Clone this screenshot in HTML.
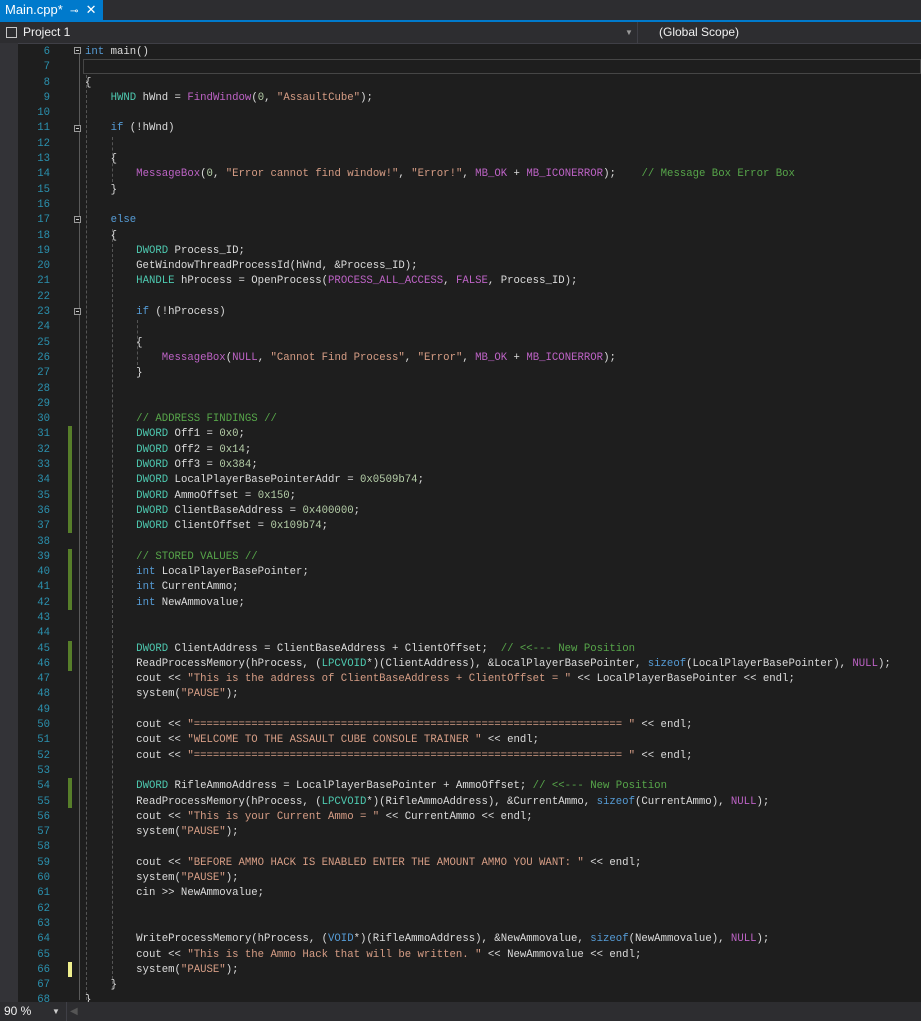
<!DOCTYPE html>
<html><head><meta charset="utf-8"><style>
body{margin:0;width:921px;height:1021px;background:#1e1e1e;overflow:hidden;position:relative;font-family:"Liberation Sans",sans-serif}
.tabbar{position:absolute;left:0;top:0;width:921px;height:20px;background:#2d2d30}
.tab{position:absolute;left:0;top:0;width:103px;height:20px;background:#007acc;color:#fff;font-size:13px;line-height:20px;padding-left:5px;box-sizing:border-box}
.blue{position:absolute;left:0;top:20px;width:921px;height:2px;background:#007acc}
.nav{position:absolute;left:0;top:22px;width:921px;height:21px;background:#2d2d30;border-bottom:1px solid #3f3f46;color:#f1f1f1;font-size:12px;line-height:21px}
.gut{position:absolute;left:0;top:43px;width:18px;height:960px;background:#333337}
.code{position:absolute;left:0;top:45px;margin:0;font-family:"Liberation Mono",monospace;font-size:10.67px;line-height:15.29px;color:#dcdcdc;white-space:pre}
.ln{position:absolute;left:18px;top:45px;width:32px;text-align:right;margin:0;font-family:"Liberation Mono",monospace;font-size:10.67px;line-height:15.29px;color:#2b91af;white-space:pre}
.k{color:#569cd6}.t{color:#4ec9b0}.m{color:#bd63c5}.s{color:#d69d85}.c{color:#57a64a}.n{color:#b5cea8}
.g{position:absolute;left:68px;width:4px;background:#577e2a}
.fb{position:absolute;left:74px;width:7px;height:7px;border:1px solid #999;box-sizing:border-box;background:#1e1e1e}
.fb:after{content:"";position:absolute;left:1px;top:2px;width:3px;height:1px;background:#ccc}
.vg{position:absolute;border-left:1px dashed #555;width:0}
.status{position:absolute;left:0;top:1002px;width:921px;height:19px;background:#2d2d30;color:#f1f1f1;font-size:12px;line-height:19px}
</style></head><body>
<div class="tabbar"><div class="tab">Main.cpp*&nbsp;&nbsp;<span style="font-size:10px">⊸</span>&nbsp;&nbsp;✕</div></div>
<div class="blue"></div>
<div class="nav">
<span style="position:absolute;left:6px;top:5px;width:11px;height:11px;border:1px solid #c6c6c6;box-sizing:border-box"></span>
<span style="position:absolute;left:23px">Project 1</span>
<span style="position:absolute;left:625px;color:#999;font-size:8px">▼</span>
<span style="position:absolute;left:637px;top:0;height:21px;border-left:1px solid #3f3f46"></span>
<span style="position:absolute;left:659px">(Global Scope)</span>
</div>
<div class="gut"></div>
<div style="position:absolute;left:83px;top:59px;width:838px;height:15px;border:1px solid #464646;box-sizing:border-box"></div>
<div style="position:absolute;left:79px;top:54px;height:946px;border-left:1px solid #5a5a5a"></div>
<div class="vg" style="left:86px;top:75px;height:925px"></div>
<div class="vg" style="left:112px;top:137px;height:45px"></div>
<div class="vg" style="left:112px;top:229px;height:760px"></div>
<div class="vg" style="left:137px;top:320px;height:45px"></div>
<div class="fb" style="top:47px"></div>
<div class="fb" style="top:125px"></div>
<div class="fb" style="top:216px"></div>
<div class="fb" style="top:308px"></div>
<div class="g" style="top:426px;height:107px"></div>
<div class="g" style="top:549px;height:61px"></div>
<div class="g" style="top:641px;height:30px"></div>
<div class="g" style="top:778px;height:30px"></div>
<div class="g" style="top:962px;height:15px;background:#efef8e"></div>
<pre class="ln">6
7
8
9
10
11
12
13
14
15
16
17
18
19
20
21
22
23
24
25
26
27
28
29
30
31
32
33
34
35
36
37
38
39
40
41
42
43
44
45
46
47
48
49
50
51
52
53
54
55
56
57
58
59
60
61
62
63
64
65
66
67
68</pre>
<pre class="code" style="left:85px"><span class="k">int</span> main()

{
    <span class="t">HWND</span> hWnd = <span class="m">FindWindow</span>(<span class="n">0</span>, <span class="s">"AssaultCube"</span>);

    <span class="k">if</span> (!hWnd)

    {
        <span class="m">MessageBox</span>(<span class="n">0</span>, <span class="s">"Error cannot find window!"</span>, <span class="s">"Error!"</span>, <span class="m">MB_OK</span> + <span class="m">MB_ICONERROR</span>);    <span class="c">// Message Box Error Box</span>
    }

    <span class="k">else</span>
    {
        <span class="t">DWORD</span> Process_ID;
        GetWindowThreadProcessId(hWnd, &amp;Process_ID);
        <span class="t">HANDLE</span> hProcess = OpenProcess(<span class="m">PROCESS_ALL_ACCESS</span>, <span class="m">FALSE</span>, Process_ID);

        <span class="k">if</span> (!hProcess)

        {
            <span class="m">MessageBox</span>(<span class="m">NULL</span>, <span class="s">"Cannot Find Process"</span>, <span class="s">"Error"</span>, <span class="m">MB_OK</span> + <span class="m">MB_ICONERROR</span>);
        }


        <span class="c">// ADDRESS FINDINGS //</span>
        <span class="t">DWORD</span> Off1 = <span class="n">0x0</span>;
        <span class="t">DWORD</span> Off2 = <span class="n">0x14</span>;
        <span class="t">DWORD</span> Off3 = <span class="n">0x384</span>;
        <span class="t">DWORD</span> LocalPlayerBasePointerAddr = <span class="n">0x0509b74</span>;
        <span class="t">DWORD</span> AmmoOffset = <span class="n">0x150</span>;
        <span class="t">DWORD</span> ClientBaseAddress = <span class="n">0x400000</span>;
        <span class="t">DWORD</span> ClientOffset = <span class="n">0x109b74</span>;

        <span class="c">// STORED VALUES //</span>
        <span class="k">int</span> LocalPlayerBasePointer;
        <span class="k">int</span> CurrentAmmo;
        <span class="k">int</span> NewAmmovalue;


        <span class="t">DWORD</span> ClientAddress = ClientBaseAddress + ClientOffset;  <span class="c">// &lt;&lt;--- New Position</span>
        ReadProcessMemory(hProcess, (<span class="t">LPCVOID</span>*)(ClientAddress), &amp;LocalPlayerBasePointer, <span class="k">sizeof</span>(LocalPlayerBasePointer), <span class="m">NULL</span>);
        cout &lt;&lt; <span class="s">"This is the address of ClientBaseAddress + ClientOffset = "</span> &lt;&lt; LocalPlayerBasePointer &lt;&lt; endl;
        system(<span class="s">"PAUSE"</span>);

        cout &lt;&lt; <span class="s">"=================================================================== "</span> &lt;&lt; endl;
        cout &lt;&lt; <span class="s">"WELCOME TO THE ASSAULT CUBE CONSOLE TRAINER "</span> &lt;&lt; endl;
        cout &lt;&lt; <span class="s">"=================================================================== "</span> &lt;&lt; endl;

        <span class="t">DWORD</span> RifleAmmoAddress = LocalPlayerBasePointer + AmmoOffset; <span class="c">// &lt;&lt;--- New Position</span>
        ReadProcessMemory(hProcess, (<span class="t">LPCVOID</span>*)(RifleAmmoAddress), &amp;CurrentAmmo, <span class="k">sizeof</span>(CurrentAmmo), <span class="m">NULL</span>);
        cout &lt;&lt; <span class="s">"This is your Current Ammo = "</span> &lt;&lt; CurrentAmmo &lt;&lt; endl;
        system(<span class="s">"PAUSE"</span>);

        cout &lt;&lt; <span class="s">"BEFORE AMMO HACK IS ENABLED ENTER THE AMOUNT AMMO YOU WANT: "</span> &lt;&lt; endl;
        system(<span class="s">"PAUSE"</span>);
        cin &gt;&gt; NewAmmovalue;


        WriteProcessMemory(hProcess, (<span class="k">VOID</span>*)(RifleAmmoAddress), &amp;NewAmmovalue, <span class="k">sizeof</span>(NewAmmovalue), <span class="m">NULL</span>);
        cout &lt;&lt; <span class="s">"This is the Ammo Hack that will be written. "</span> &lt;&lt; NewAmmovalue &lt;&lt; endl;
        system(<span class="s">"PAUSE"</span>);
    }
}</pre>
<div class="status"><span style="position:absolute;left:4px">90 %</span><span style="position:absolute;left:52px;font-size:8px;color:#ccc">▼</span><span style="position:absolute;left:66px;top:0;height:19px;border-left:1px solid #3f3f46"></span><span style="position:absolute;left:70px;color:#555;font-size:10px">◀</span></div>
</body></html>
